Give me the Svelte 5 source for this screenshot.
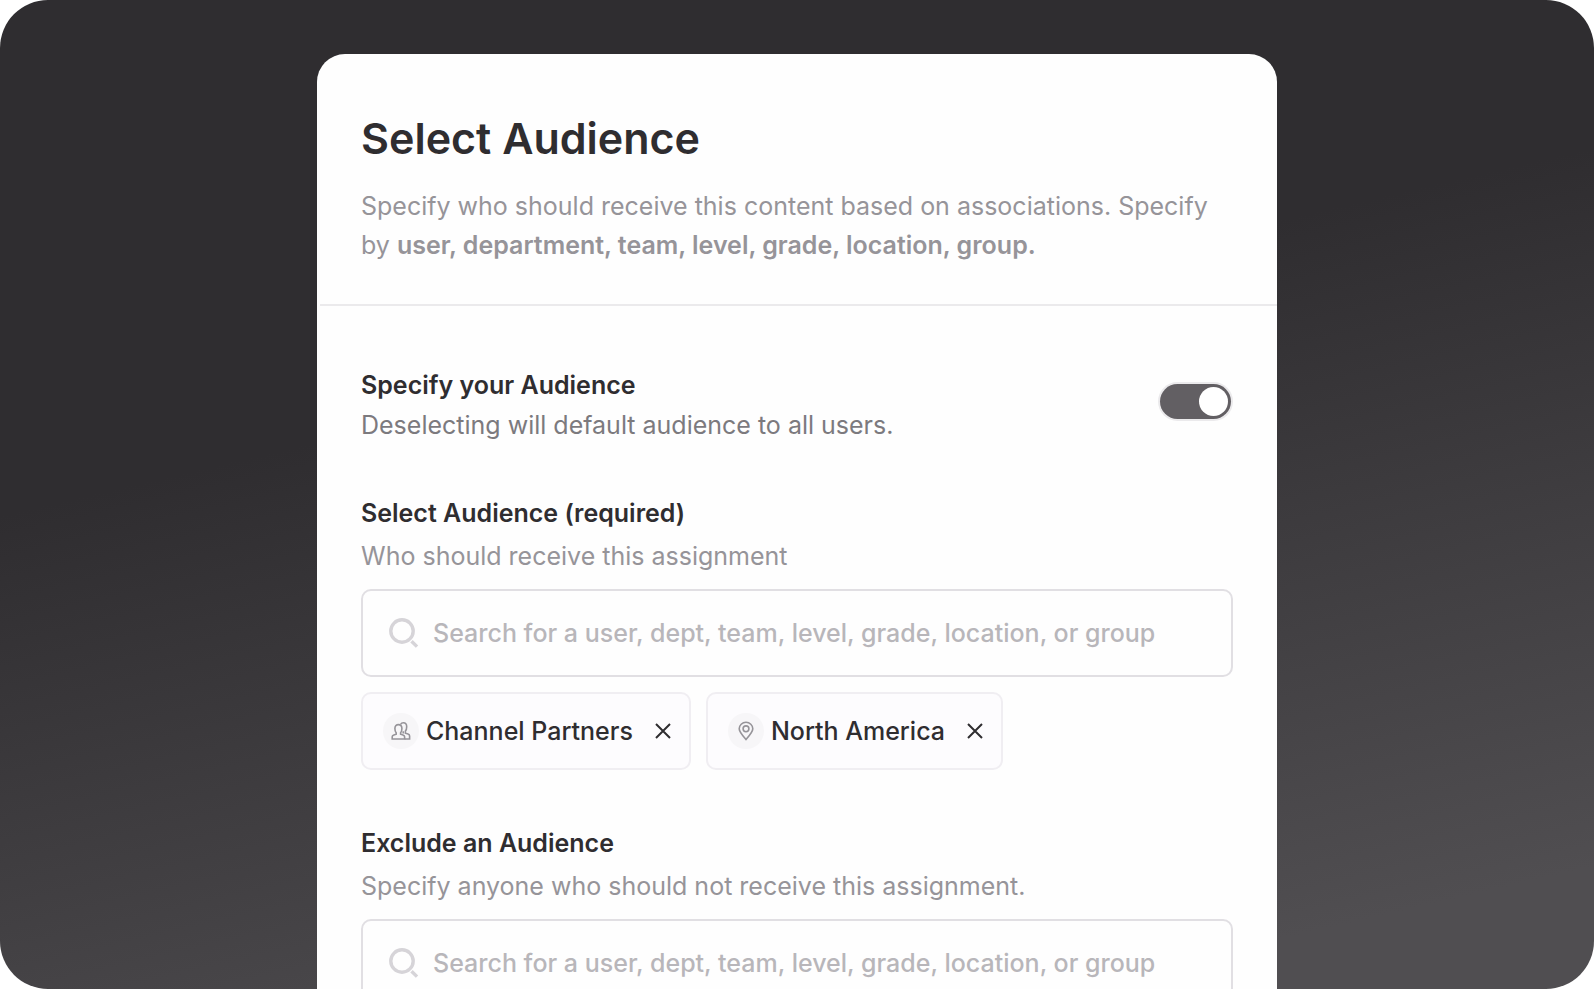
<script>
  let enabled = $state(true);
  let chips = $state([
    { name: 'Channel Partners', icon: 'people' },
    { name: 'North America', icon: 'pin' }
  ]);
  let include = $state('');
  let exclude = $state('');
  const hint = 'Search for a user, dept, team, level, grade, location, or group';
  const remove = (name) => (chips = chips.filter((c) => c.name !== name));
</script>

{#snippet searchIcon()}
  <svg class="search-icon" viewBox="0 0 30 30" aria-hidden="true">
    <circle cx="13" cy="13" r="11.2" />
    <path d="M22.500 23.200 28 28.600" />
  </svg>
{/snippet}

<main class="stage">
  <section class="card" aria-labelledby="title">
    <header>
      <h1 id="title">Select Audience</h1>
      <p>
        Specify who should receive this content based on associations. Specify by
        <strong>user, department, team, level, grade, location, group.</strong>
      </p>
    </header>

    <form>
      <div class="switch-row">
        <div>
          <label class="heading" for="enabled">Specify your Audience</label>
          <p class="note">Deselecting will default audience to all users.</p>
        </div>
        <input id="enabled" type="checkbox" role="switch" bind:checked={enabled} />
      </div>

      <div class="field">
        <label class="heading" for="include">Select Audience (required)</label>
        <p class="sub">Who should receive this assignment</p>
        <div class="search">
          {@render searchIcon()}
          <input id="include" type="text" placeholder={hint} bind:value={include} />
        </div>
        <ul class="chips">
          {#each chips as chip (chip.name)}
            <li class="chip">
              <span class="badge">
                {#if chip.icon === 'people'}
                  <svg viewBox="0 0 20 20" aria-hidden="true">
                    <path d="M1.2 18v-2.2c0-1 .6-1.600 1.600-1.900l2.400-.7v-1.300C4.300 11 3.900 9.800 3.900 7.600 3.900 5.100 5.400 3.600 7.400 3.600s3.500 1.500 3.500 4c0 2.200-.4 3.400-1.300 4.300v1.300l2.400.7c1 .3 1.600.9 1.600 1.900V18Z" />
                    <path d="M9.600 3.300c.6-1 1.500-1.500 2.700-1.500 2 0 3.400 1.500 3.400 4 0 2.200-.5 3.400-1.300 4.300v2.100l2.700.9c1 .3 1.500.9 1.500 1.900v3h-5M12.200 10.200v2.200" />
                  </svg>
                {:else}
                  <svg viewBox="0 0 20 20" aria-hidden="true">
                    <path d="M10 18.500C6.200 14.200 3.200 11 3.200 7.800a6.800 6.500 0 0 1 13.600 0c0 3.200-3 6.400-6.800 10.700Z" />
                    <circle cx="10" cy="7.800" r="2.900" />
                  </svg>
                {/if}
              </span>
              <span>{chip.name}</span>
              <button type="button" aria-label="Remove {chip.name}" onclick={() => remove(chip.name)}>
                <svg viewBox="0 0 16 16" aria-hidden="true"><path d="M1 1 15 15M15 1 1 15" /></svg>
              </button>
            </li>
          {/each}
        </ul>
      </div>

      <div class="field">
        <label class="heading" for="exclude">Exclude an Audience</label>
        <p class="sub">Specify anyone who should not receive this assignment.</p>
        <div class="search">
          {@render searchIcon()}
          <input id="exclude" type="text" placeholder={hint} bind:value={exclude} />
        </div>
      </div>
    </form>
  </section>
</main>

<style>
  :global(body) {
    margin: 0;
    background: #fff;
  }
  .stage {
    box-sizing: border-box;
    height: 100vh;
    overflow: hidden;
    padding: 54px 20px 0;
    border-radius: 48px;
    background: linear-gradient(167deg, #2f2d30 38%, #504e51 91%);
    font-family: Inter, sans-serif;
    font-size: 25px;
    line-height: 40px;
    color: #2f2d30;
  }
  .card {
    max-width: 960px;
    margin: 0 auto;
    background: #fefefe;
    border-radius: 28px 28px 0 0;
  }
  h1,
  p,
  ul {
    margin: 0;
    padding: 0;
  }
  header {
    margin-left: 3px;
    padding: 56px 44px 39px 41px;
    border-bottom: 2px solid #ebeaec;
  }
  h1 {
    margin-bottom: 21px;
    font-size: 43px;
    font-weight: 600;
    line-height: 56px;
  }
  header p {
    line-height: 39px;
    color: #969499;
  }
  strong {
    font-weight: 600;
  }
  form {
    padding: 59px 44px;
  }
  .switch-row {
    display: flex;
    justify-content: space-between;
    align-items: flex-start;
    margin-bottom: 48px;
  }
  .heading {
    display: block;
    font-weight: 600;
  }
  .note {
    color: #7c7a7e;
  }
  .switch-row input {
    appearance: none;
    display: flex;
    box-sizing: border-box;
    width: 71px;
    height: 35px;
    margin: 19px 2px 0;
    padding: 3px;
    border-radius: 18px;
    background: #c9c7cb;
    box-shadow: 0 0 0 2px #ebeaec;
  }
  .switch-row input::before {
    content: '';
    width: 29px;
    height: 29px;
    border-radius: 50%;
    background: #fff;
  }
  .switch-row input:checked {
    justify-content: flex-end;
    background: #625f63;
  }
  .field {
    margin-bottom: 53px;
  }
  .sub {
    margin: 3px 0 13px;
    color: #969499;
  }
  .search {
    display: flex;
    align-items: center;
    gap: 14px;
    box-sizing: border-box;
    height: 88px;
    padding: 0 26px;
    border: 2px solid #e1dfe3;
    border-radius: 10px;
  }
  .search-icon {
    flex: none;
    width: 30px;
    height: 30px;
    fill: none;
    stroke: #d6d4d8;
    stroke-width: 3.400;
  }
  .search input {
    flex: 1;
    min-width: 0;
    padding: 0;
    border: 0;
    outline: 0;
    background: none;
    font: inherit;
    font-weight: 500;
    color: inherit;
  }
  .search input::placeholder {
    color: #b8b6ba;
    opacity: 1;
  }
  .chips {
    display: flex;
    flex-wrap: wrap;
    gap: 15px;
    margin-top: 15px;
    list-style: none;
  }
  .chip {
    display: flex;
    align-items: center;
    box-sizing: border-box;
    height: 78px;
    padding: 0 15px 0 20px;
    border: 2px solid #f0eef2;
    border-radius: 10px;
    background: #fdfcfe;
    font-weight: 500;
  }
  .badge {
    display: flex;
    align-items: center;
    justify-content: center;
    width: 36px;
    height: 36px;
    margin-right: 7px;
    border-radius: 50%;
    background: #f7f6f8;
  }
  .badge svg {
    width: 20px;
    height: 20px;
    fill: none;
    stroke: #969499;
    stroke-width: 1.600;
  }
  .chip button {
    display: flex;
    margin-left: 19px;
    padding: 3px;
    border: 0;
    background: none;
    color: inherit;
  }
  .chip button svg {
    width: 16px;
    height: 16px;
    stroke: currentColor;
    stroke-width: 2;
  }
</style>
